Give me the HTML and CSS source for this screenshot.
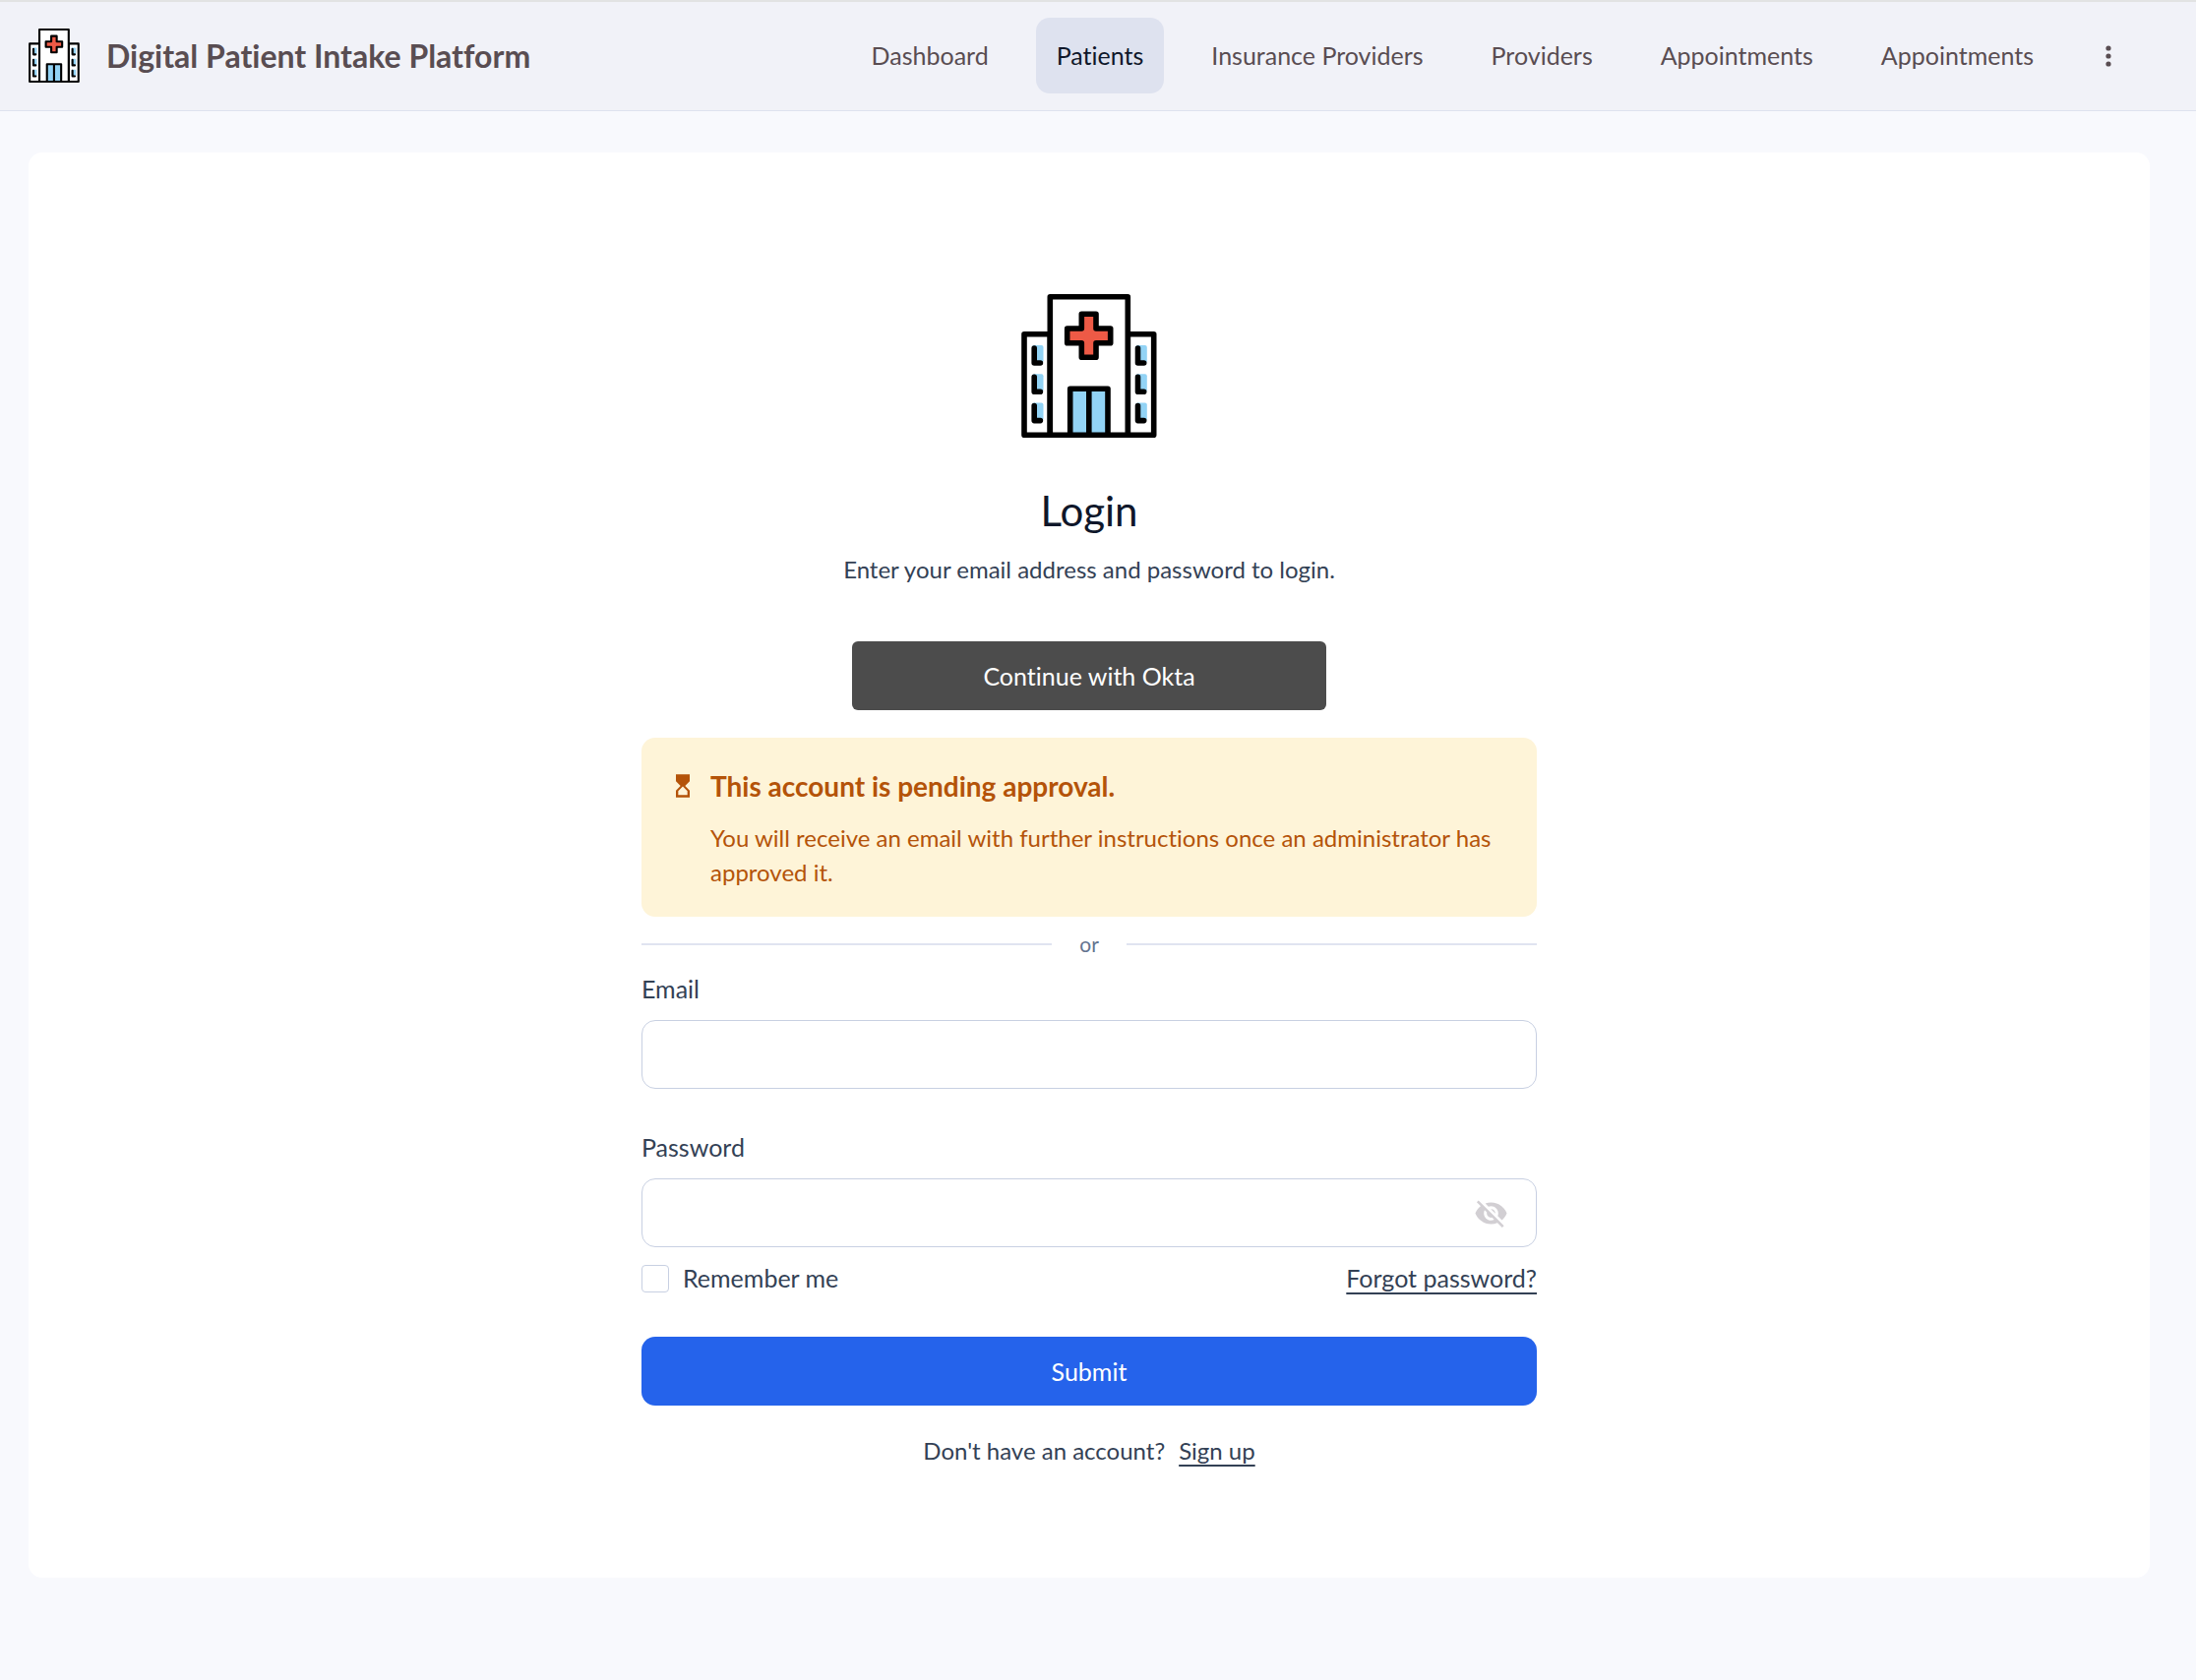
FILE: index.html
```html
<!DOCTYPE html>
<html lang="en">
<head>
    <meta charset="UTF-8">
    <meta name="viewport" content="width=device-width, initial-scale=1.0">
    <title>Login - Digital Patient Intake Platform</title>
    <link rel="stylesheet" href="styles.css">
</head>
<body>
    <!-- Hospital logo, used in the header and above the form -->
    <svg class="sprite" width="0" height="0" aria-hidden="true">
        <symbol id="hospital" viewBox="0 0 138 146">
            <g fill="#fff" stroke="#000" stroke-width="5.6" stroke-linejoin="round">
                <path d="M3 40.7h26.3v102.5H3zM108.3 40.7h26.4v102.5h-26.4z"/>
                <path d="M29.3 2.8h79v140.4h-79z"/>
                <path fill="#92d3f5" d="M49.7 96.2H88v47H49.7z"/>
                <path d="M68.8 96v47"/>
                <path fill="#ee5a46" d="M61.3 20.3H76V35h14.7v14.7H76v14.6H61.3V49.7H46.7V35h14.6z"/>
            </g>
            <g fill="#92d3f5">
                <rect x="11" y="52" width="11.5" height="18" rx="2"/>
                <rect x="11" y="81.3" width="11.5" height="18" rx="2"/>
                <rect x="11" y="110.6" width="11.5" height="18" rx="2"/>
                <rect x="116.3" y="52" width="11.5" height="18" rx="2"/>
                <rect x="116.3" y="81.3" width="11.5" height="18" rx="2"/>
                <rect x="116.3" y="110.6" width="11.5" height="18" rx="2"/>
            </g>
            <path fill="none" stroke="#000" stroke-width="5.6" stroke-linecap="round" stroke-linejoin="round" d="M13.2 55v15h6.2M13.2 84.3v15h6.2M13.2 113.6v15h6.2M118.5 55v15h6.2M118.5 84.3v15h6.2M118.5 113.6v15h6.2"/>
        </symbol>
    </svg>

    <header class="header">
        <a class="brand" href="#">
            <svg class="brand-logo" aria-hidden="true"><use href="#hospital"/></svg>
            <span>Digital Patient Intake Platform</span>
        </a>
        <nav class="nav">
            <a class="nav-link" href="#">Dashboard</a>
            <a class="nav-link active" href="#">Patients</a>
            <a class="nav-link" href="#">Insurance Providers</a>
            <a class="nav-link" href="#">Providers</a>
            <a class="nav-link" href="#">Appointments</a>
            <a class="nav-link" href="#">Appointments</a>
            <button class="nav-more" type="button" aria-label="More">
                <svg width="14" height="28" viewBox="0 0 14 28" fill="currentColor" aria-hidden="true">
                    <circle cx="7" cy="6" r="2.6"/>
                    <circle cx="7" cy="14" r="2.6"/>
                    <circle cx="7" cy="22" r="2.6"/>
                </svg>
            </button>
        </nav>
    </header>

    <main class="card">
        <form class="login">
            <svg class="login-logo" aria-hidden="true"><use href="#hospital"/></svg>
            <h1>Login</h1>
            <p class="subtitle">Enter your email address and password to login.</p>

            <button class="btn btn-okta" type="button">Continue with Okta</button>

            <div class="alert" role="status">
                <svg class="alert-icon" viewBox="0 0 24 24" fill="currentColor" aria-hidden="true">
                    <path d="M6 2l.01 6L10 12l-3.99 4.01L6 22h12v-6l-4-4 4-3.99V2H6zm10 14.5V20H8v-3.5l4-4 4 4z"/>
                </svg>
                <div>
                    <h2>This account is pending approval.</h2>
                    <p>You will receive an email with further instructions once an administrator has approved it.</p>
                </div>
            </div>

            <div class="divider">or</div>

            <div class="field">
                <label for="email">Email</label>
                <div class="input-box">
                    <input id="email" type="email">
                </div>
            </div>

            <div class="field field-password">
                <label for="password">Password</label>
                <div class="input-box">
                    <input id="password" type="password">
                    <button class="toggle" type="button" aria-label="Show password">
                        <svg width="35" height="35" viewBox="0 0 24 24" fill="currentColor" aria-hidden="true">
                            <path d="M12 7c2.76 0 5 2.24 5 5 0 .65-.13 1.26-.36 1.83l2.92 2.92c1.51-1.26 2.7-2.89 3.43-4.75-1.73-4.39-6-7.5-11-7.5-1.4 0-2.74.25-3.98.7l2.16 2.16C10.74 7.13 11.35 7 12 7zM2 4.27l2.28 2.28.46.46C3.08 8.3 1.78 10.02 1 12c1.73 4.39 6 7.5 11 7.5 1.55 0 3.03-.3 4.38-.84l.42.42L19.73 22 21 20.73 3.27 3 2 4.27zM7.53 9.8l1.55 1.55c-.05.21-.08.43-.08.65 0 1.66 1.34 3 3 3 .22 0 .44-.03.65-.08l1.55 1.55c-.67.33-1.41.53-2.2.53-2.76 0-5-2.24-5-5 0-.79.2-1.53.53-2.2zm4.31-.78l3.15 3.15.02-.16c0-1.66-1.34-3-3-3l-.17.01z"/>
                        </svg>
                    </button>
                </div>
            </div>

            <div class="options">
                <label class="remember">
                    <input type="checkbox">
                    Remember me
                </label>
                <a class="link" href="#">Forgot password?</a>
            </div>

            <button class="btn btn-submit" type="submit">Submit</button>

            <p class="signup">
                <span>Don't have an account?</span>
                <a class="link" href="#">Sign up</a>
            </p>
        </form>
    </main>
</body>
</html>
```

FILE: styles.css
```css
* {
    box-sizing: border-box;
}
body {
    margin: 0;
    background-color: #f8f9fd;
    color: #334155;
    font-family: Lato, sans-serif;
    font-size: 25px;
    font-variant-ligatures: none;
    line-height: 35px;
}
h1, h2, p {
    margin: 0;
}
p {
    font-size: 24px;
}
button, input {
    font: inherit;
    font-variant-ligatures: none;
}
button {
    cursor: pointer;
}
.sprite {
    display: block;
}

/* Header */
.header {
    display: flex;
    align-items: center;
    justify-content: space-between;
    padding: 16px 61px 17px 29px;
    background-color: #f1f2f8;
    border-top: 2px solid #e2e3e3;
    border-bottom: 1px solid #dee2ef;
    color: #594d52;
}
.brand {
    display: flex;
    align-items: center;
    gap: 27px;
    color: inherit;
    font-size: 32px;
    font-weight: 700;
    text-decoration: none;
}
.brand-logo {
    width: 52px;
    height: 55px;
}
.nav {
    display: flex;
    align-items: center;
    gap: 27px;
}
.nav-link {
    padding: 21px;
    border-radius: 14px;
    color: inherit;
    text-decoration: none;
}
.nav-link.active {
    background-color: #dee2ef;
    color: #0f172a;
}
.nav-more {
    display: flex;
    padding: 21px;
    border: none;
    background: none;
    color: inherit;
}

/* Login card */
.card {
    margin: 42px 47px 42px 29px;
    padding: 144px 28px 112px;
    border-radius: 14px;
    background-color: #fff;
}
.login {
    display: flex;
    flex-direction: column;
    max-width: 910px;
    margin: 0 auto;
}
.login-logo {
    align-self: center;
    width: 138px;
    height: 146px;
}
h1 {
    margin: 46px 0 14px;
    color: #0f172a;
    font-size: 42px;
    font-weight: 400;
    line-height: 56px;
    text-align: center;
}
.subtitle {
    text-align: center;
}
.btn {
    height: 70px;
    border: none;
    color: #fff;
}
.btn-okta {
    align-self: center;
    width: 482px;
    margin: 56px 0 28px;
    border-radius: 6px;
    background-color: #4c4c4c;
}
.alert {
    display: flex;
    gap: 14px;
    padding: 28px;
    border-radius: 14px;
    background-color: #fef4d8;
    color: #b45309;
}
.alert-icon {
    flex: none;
    width: 28px;
    height: 28px;
    margin-top: 7px;
}
.alert h2 {
    margin-bottom: 14px;
    font-size: 28px;
    font-weight: 700;
    line-height: 42px;
}
.divider {
    display: flex;
    align-items: center;
    gap: 28px;
    margin: 14px 0;
    color: #64748f;
    font-size: 21px;
    line-height: 28px;
}
.divider::before,
.divider::after {
    content: "";
    flex: 1;
    height: 2px;
    background-color: #e0e4f0;
}
.field {
    display: flex;
    flex-direction: column;
    gap: 14px;
}
.field-password {
    margin-top: 42px;
}
.input-box {
    display: flex;
    align-items: center;
    height: 70px;
    padding: 0 28px;
    border: 1px solid #c8d0e2;
    border-radius: 14px;
}
.input-box:focus-within {
    border-color: #2563eb;
}
.input-box input {
    flex: 1;
    min-width: 0;
    padding: 0;
    border: none;
    outline: none;
    background: none;
    color: inherit;
}
.toggle {
    display: flex;
    padding: 0;
    border: none;
    background: none;
    color: #d2cfd3;
}
.options {
    display: flex;
    align-items: center;
    justify-content: space-between;
    margin: 14px 0 42px;
}
.remember {
    display: flex;
    align-items: center;
    gap: 14px;
}
.remember input {
    appearance: none;
    width: 28px;
    height: 28px;
    margin: 0;
    border: 1px solid #c8d0e2;
    border-radius: 4px;
}
.remember input:checked {
    background-color: #2563eb;
}
.link {
    color: inherit;
    text-decoration-thickness: 2px;
    text-decoration-skip-ink: none;
    text-underline-offset: 5px;
}
.btn-submit {
    border-radius: 14px;
    background-color: #2563eb;
}
.signup {
    display: flex;
    justify-content: center;
    gap: 14px;
    margin-top: 28px;
}
```
